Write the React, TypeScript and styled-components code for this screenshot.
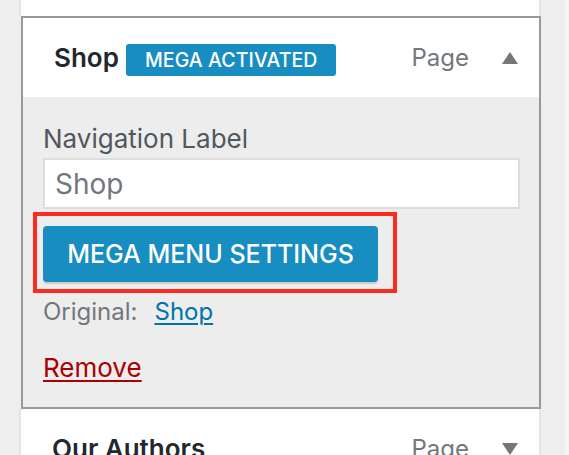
import React from "react";
import styled, { createGlobalStyle, css } from "styled-components";

const GlobalStyle = createGlobalStyle`
  html, body { margin: 0; padding: 0; }
  body {
    background: #eeeeee;
    font-family: Inter, "Noto Sans", "Liberation Sans", sans-serif;
    -webkit-font-smoothing: antialiased;
  }
  * { box-sizing: border-box; }
`;

const Page = styled.div`
  display: flex;
  width: 569px;
  height: 455px;
  overflow: hidden;
`;

const Column = styled.div`
  flex: 0 0 565px;
  padding: 0 24px 0 19px;
  display: flex;
  flex-direction: column;
`;

const Edge = styled.div`
  flex: 1;
  background: #f5f5f5;
`;

const Stub = styled.div`
  height: 16px;
  background: #fff;
  border-left: 2px solid #e4e4e4;
  border-right: 2px solid #e4e4e4;
  flex: 0 0 auto;
`;

const Item = styled.div<{ $active?: boolean }>`
  flex: 0 0 auto;
  ${(p) =>
    p.$active
      ? css`
          margin-left: 2px;
          border: 2px solid #999999;
        `
      : css`
          border: 2px solid #e4e4e4;
          border-top: none;
        `}
`;

const Header = styled.div`
  height: 79px;
  background: #fff;
  display: flex;
  align-items: center;
  padding: 0 21px 0 31px;
`;

const Title = styled.span`
  font-size: 26px;
  font-weight: 600;
  color: #23282d;
`;

const Badge = styled.span`
  margin-left: 7px;
  height: 32px;
  display: inline-flex;
  align-items: center;
  padding: 0 18px 0 19px;
  border-radius: 3px;
  background: #188dc1;
  color: #fff;
  font-size: 19.5px;
  font-weight: 500;
  letter-spacing: 0.1px;
  margin-top: 4px;
`;

const Spacer = styled.span`
  flex: 1;
`;

const Type = styled.span`
  font-size: 24px;
  color: #72777c;
  margin-right: 33px;
`;

const Arrow = styled.svg`
  width: 16px;
  height: 12px;
  display: block;
`;

const Settings = styled.div`
  background: #ededed;
  padding: 26px 19px 24px 20px;
  display: flex;
  flex-direction: column;
  align-items: flex-start;
`;

const Label = styled.label`
  font-size: 26px;
  line-height: 31px;
  color: #50575e;
`;

const TextInput = styled.input`
  margin-top: 4px;
  width: 100%;
  height: 51px;
  border: 2px solid #dddddd;
  background: #fff;
  padding: 0 10px;
  font-family: inherit;
  font-size: 28px;
  color: #72777c;
  outline: none;
`;

const Highlight = styled.div`
  margin: 3px 0 0 -10px;
  border: 4px solid #fd2b1f;
  padding: 10px 15px 7px 6px;
`;

const PrimaryButton = styled.button`
  display: block;
  width: 335px;
  height: 56px;
  border: none;
  border-radius: 4px;
  background: #188dc1;
  color: #fff;
  font-family: inherit;
  font-size: 25px;
  font-weight: 500;
  box-shadow: 0 2px 1px rgba(0, 0, 0, 0.14);
  cursor: pointer;
`;

const Original = styled.div`
  margin-top: 4px;
  font-size: 24px;
  line-height: 29px;
  color: #72777c;
  display: flex;
  gap: 17px;
`;

const Link = styled.a<{ $danger?: boolean }>`
  color: ${(p) => (p.$danger ? "#a00" : "#0073aa")};
  text-decoration: underline;
  text-underline-offset: 3px;
  text-decoration-thickness: 2px;
`;

const Actions = styled.div`
  margin-top: 26px;
  font-size: 26px;
  line-height: 31px;
`;

const Triangle = ({ up }: { up: boolean }) => (
  <Arrow viewBox="0 0 16 12">
    <path d={up ? "M8 0 L16 12 L0 12 Z" : "M0 0 L16 0 L8 12 Z"} fill="#72777c" />
  </Arrow>
);

export default function App() {
  return (
    <>
      <GlobalStyle />
      <Page>
        <Column>
          <Stub />
          <Item $active>
            <Header>
              <Title>Shop</Title>
              <Badge>MEGA ACTIVATED</Badge>
              <Spacer />
              <Type>Page</Type>
              <Triangle up />
            </Header>
            <Settings>
              <Label>Navigation Label</Label>
              <TextInput defaultValue="Shop" />
              <Highlight>
                <PrimaryButton>MEGA MENU SETTINGS</PrimaryButton>
              </Highlight>
              <Original>
                <span>Original:</span>
                <Link href="#">Shop</Link>
              </Original>
              <Actions>
                <Link href="#" $danger>
                  Remove
                </Link>
              </Actions>
            </Settings>
          </Item>
          <Item>
            <Header>
              <Title>Our Authors</Title>
              <Spacer />
              <Type>Page</Type>
              <Triangle up={false} />
            </Header>
          </Item>
        </Column>
        <Edge />
      </Page>
    </>
  );
}
